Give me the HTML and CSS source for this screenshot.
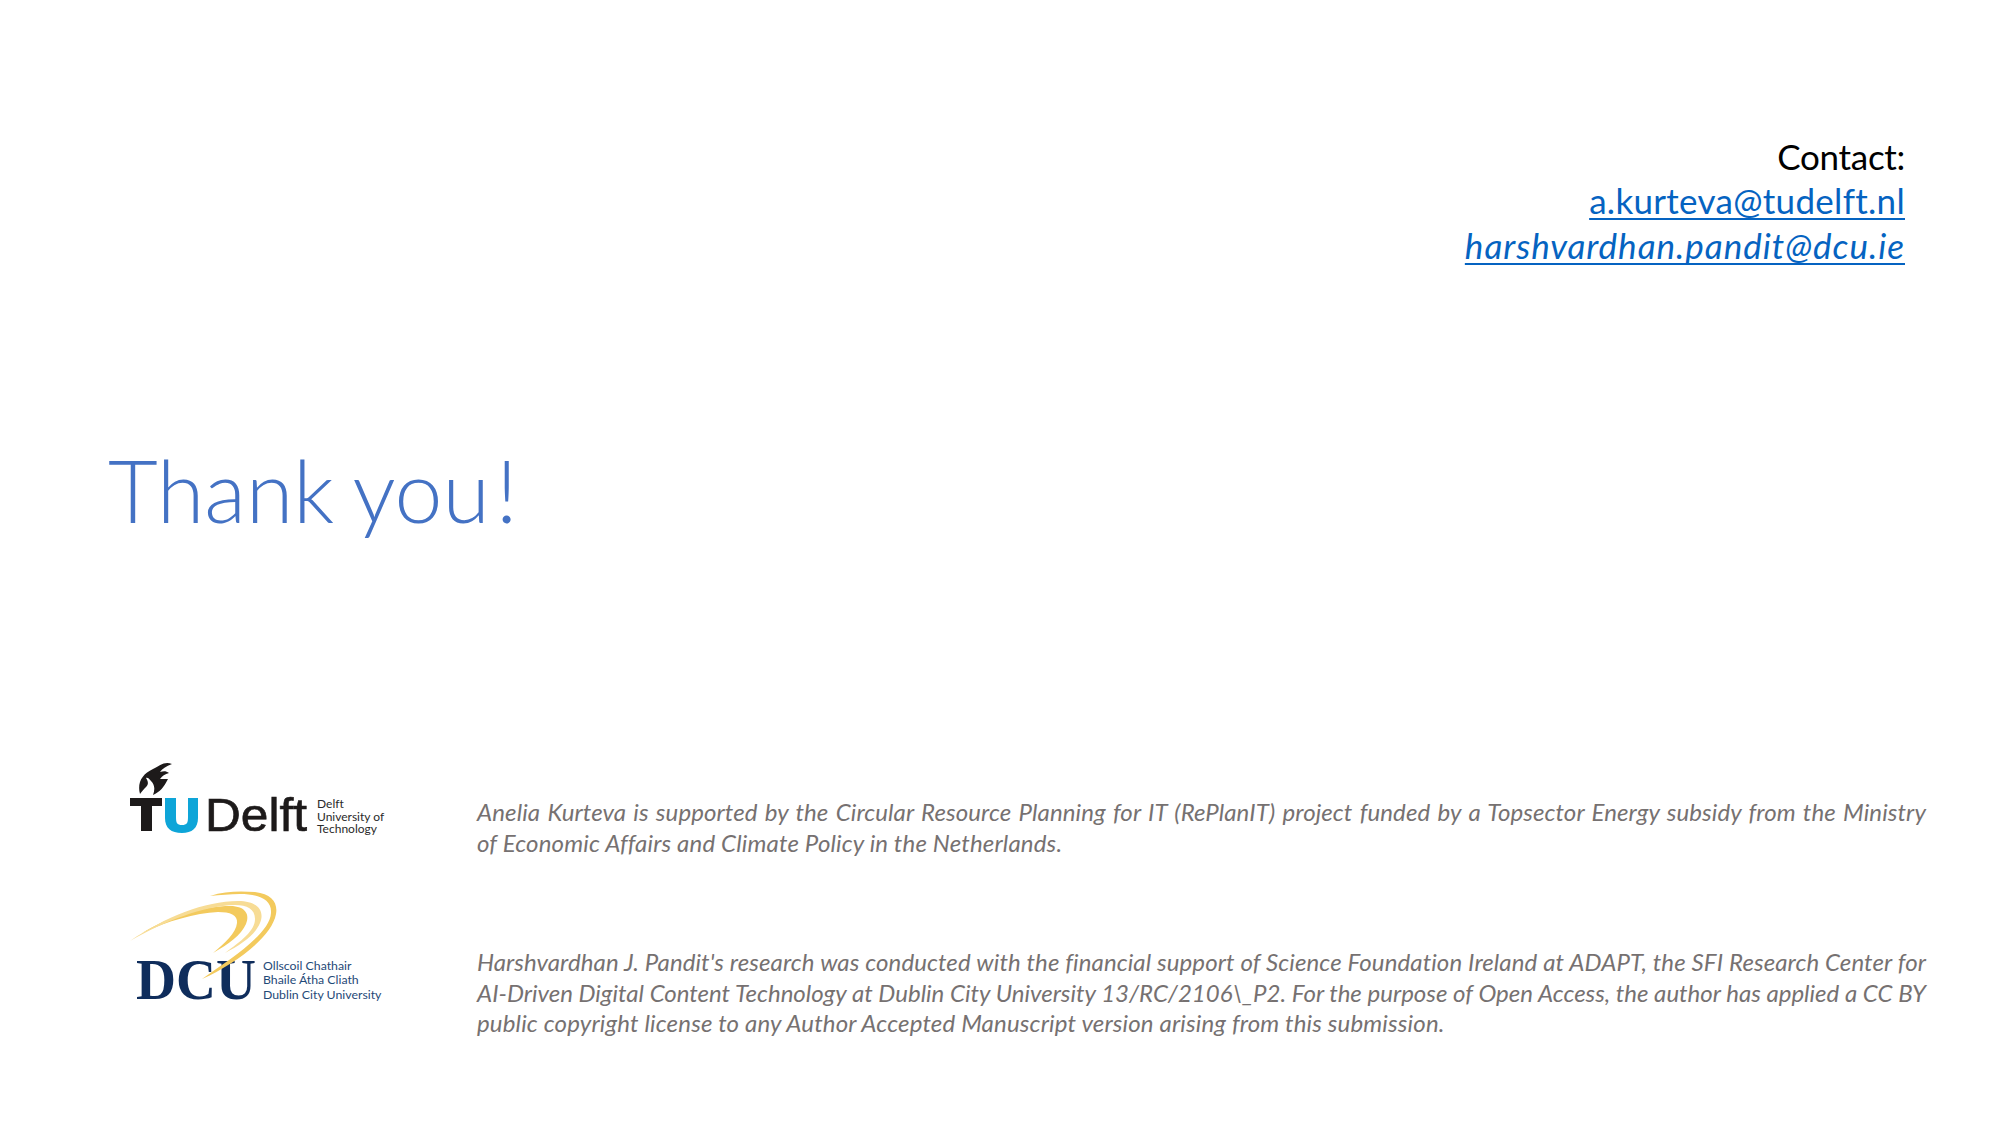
FILE: index.html
```html
<!DOCTYPE html>
<html lang="en">
<head>
<meta charset="utf-8">
<title>Thank you</title>
<link rel="stylesheet" href="styles.css">
</head>
<body>
<main class="slide">
  <section class="contact">
    <div class="contact-label">Contact:</div>
    <div><a class="mail" href="#">a.kurteva@tudelft.nl</a></div>
    <div><a class="mail mail-italic" href="#">harshvardhan.pandit@dcu.ie</a></div>
  </section>
  <h1 class="title">Thank you<span class="bang">!</span></h1>
  <section class="credits">
    <div class="credit credit-tu">
      <svg class="logo logo-tu" viewBox="0 0 320 120" role="img" aria-label="TU Delft">
        <path class="tu-black" d="M40 54C37 43 42 34 53 29C60 26 64 21 72 24C66 26 62 29 60 32C64 31 66 31 69 33C65 34 62 36 60 39C63 39 65 39 68 39C64 47 60 52 53 55C55 50 55 45 51 41C49 38 47 37 46 38C48 41 49 44 46 47C44 49 42 51 40 54Z"/>
        <path class="tu-black" d="M30 58H62V66H52V91H41V66H30Z"/>
        <path class="tu-blue" d="M65 58H76V77C76 83 77 85 82 85C87 85 88 83 88 77V58H98V78C98 88 92 93 82 93C71 93 65 88 65 78Z"/>
        <text class="tu-word" x="105" y="91" textLength="102" lengthAdjust="spacingAndGlyphs">Delft</text>
        <text class="tu-small" x="217" y="68">Delft</text>
        <text class="tu-small" x="217" y="81">University of</text>
        <text class="tu-small" x="217" y="93">Technology</text>
      </svg>
      <p class="note">
        <span class="line line-first">Anelia Kurteva is supported by the Circular Resource Planning for IT (RePlanIT) project funded by a Topsector Energy subsidy from the Ministry</span>
        <span class="line line-last">of Economic Affairs and Climate Policy in the Netherlands.</span>
      </p>
    </div>
    <div class="credit credit-dcu">
      <svg class="logo logo-dcu" viewBox="0 0 320 170" role="img" aria-label="DCU">
        <text class="dcu-word" x="36" y="130" textLength="120" lengthAdjust="spacingAndGlyphs">DCU</text>
        <path class="swoosh" d="M42 64C70 47 105 37 130 37C146 37 150 46 146 55C141 66 129 75 113 84C125 74 136 64 137 54C138 46 130 43 118 43C95 44 68 52 42 64Z"/>
        <path class="swoosh swoosh-soft" d="M30 72C65 48 105 32 138 32C158 32 165 42 160 54C155 66 142 75 125 84C141 72 155 62 155 50C155 40 147 36 135 36C103 37 65 52 30 72Z"/>
        <path class="swoosh" d="M110 27C125 22 140 22 155 23C172 25 178 34 176 45C172 68 135 95 102 110C130 90 170 65 171 44C172 30 158 25 140 25C130 25 120 26 110 27Z"/>
        <text class="dcu-small" x="163" y="101">Ollscoil Chathair</text>
        <text class="dcu-small" x="163" y="115">Bhaile Átha Cliath</text>
        <text class="dcu-small" x="163" y="130">Dublin City University</text>
      </svg>
      <p class="note">
        <span class="line line-first">Harshvardhan J. Pandit's research was conducted with the financial support of Science Foundation Ireland at ADAPT, the SFI Research Center for</span>
        <span class="line line-tight">AI-Driven Digital Content Technology at Dublin City University 13/RC/2106\_P2. For the purpose of Open Access, the author has applied a CC BY</span>
        <span class="line line-last">public copyright license to any Author Accepted Manuscript version arising from this submission.</span>
      </p>
    </div>
  </section>
</main>
</body>
</html>
```
FILE: styles.css
```css
* { box-sizing: border-box; }
html, body { margin: 0; padding: 0; background: #fff; }
.slide {
  width: 2000px;
  height: 1125px;
  overflow: hidden;
  background: #fff;
  font-family: "Lato", "Liberation Sans", sans-serif;
  font-variant-ligatures: none;
  display: flex;
  flex-direction: column;
}
.contact {
  margin-top: 133px;
  padding-right: 95px;
  text-align: right;
  font-size: 35px;
  line-height: 45px;
  color: #000;
}
.contact-label { letter-spacing: -0.3px; padding-top: 2px; line-height: 43px; }
.mail { color: #0563c1; letter-spacing: 0.3px; text-decoration: underline; text-decoration-thickness: 2px; text-underline-offset: 4px; text-decoration-skip-ink: none; }
.mail-italic { font-style: italic; letter-spacing: 1px; }
.title {
  margin: 172px 0 0 108px;
  font-size: 86px;
  line-height: 100px;
  font-weight: 300;
  word-spacing: -3px;
  color: #4472c4;
}
.bang { margin-left: 6px; }
.credits { margin-top: 0; }
.credit { display: flex; }
.credit-tu { margin-top: 200px; height: 120px; }
.credit-dcu { margin-top: 9px; height: 170px; }
.logo { margin-left: 100px; flex: none; width: 320px; }
.logo-tu { height: 120px; }
.logo-dcu { height: 170px; }
.note {
  margin: 0 0 0 57px;
  width: 1449px;
  font-size: 24px;
  line-height: 30.5px;
  font-style: italic;
  color: #767171;
}
.credit-tu .note { padding-top: 57px; }
.credit-dcu .note { padding-top: 78px; }
.line { display: block; text-align: justify; text-align-last: justify; white-space: nowrap; }
.line-first { letter-spacing: 0.1px; }
.line-tight { letter-spacing: 0; word-spacing: -1.2px; }
.line-last { letter-spacing: 0.17px; text-align-last: left; }
.tu-black { fill: #1d1a1a; }
.tu-blue { fill: #0ea5d8; }
.tu-word { font-family: "Liberation Sans", sans-serif; font-size: 47px; fill: #1d1a1a; stroke: #1d1a1a; stroke-width: 0.7px; }
.tu-small { font-family: "Lato", sans-serif; font-size: 12px; fill: #2a2a2a; }
.dcu-word { font-family: "Liberation Serif", serif; font-weight: 700; font-size: 56px; fill: #0f2d5c; }
.dcu-small { font-family: "Lato", sans-serif; font-size: 12.3px; fill: #1f4a78; }
.swoosh { fill: #f3ca5d; }
.swoosh-soft { fill: #f7dc95; }
```
